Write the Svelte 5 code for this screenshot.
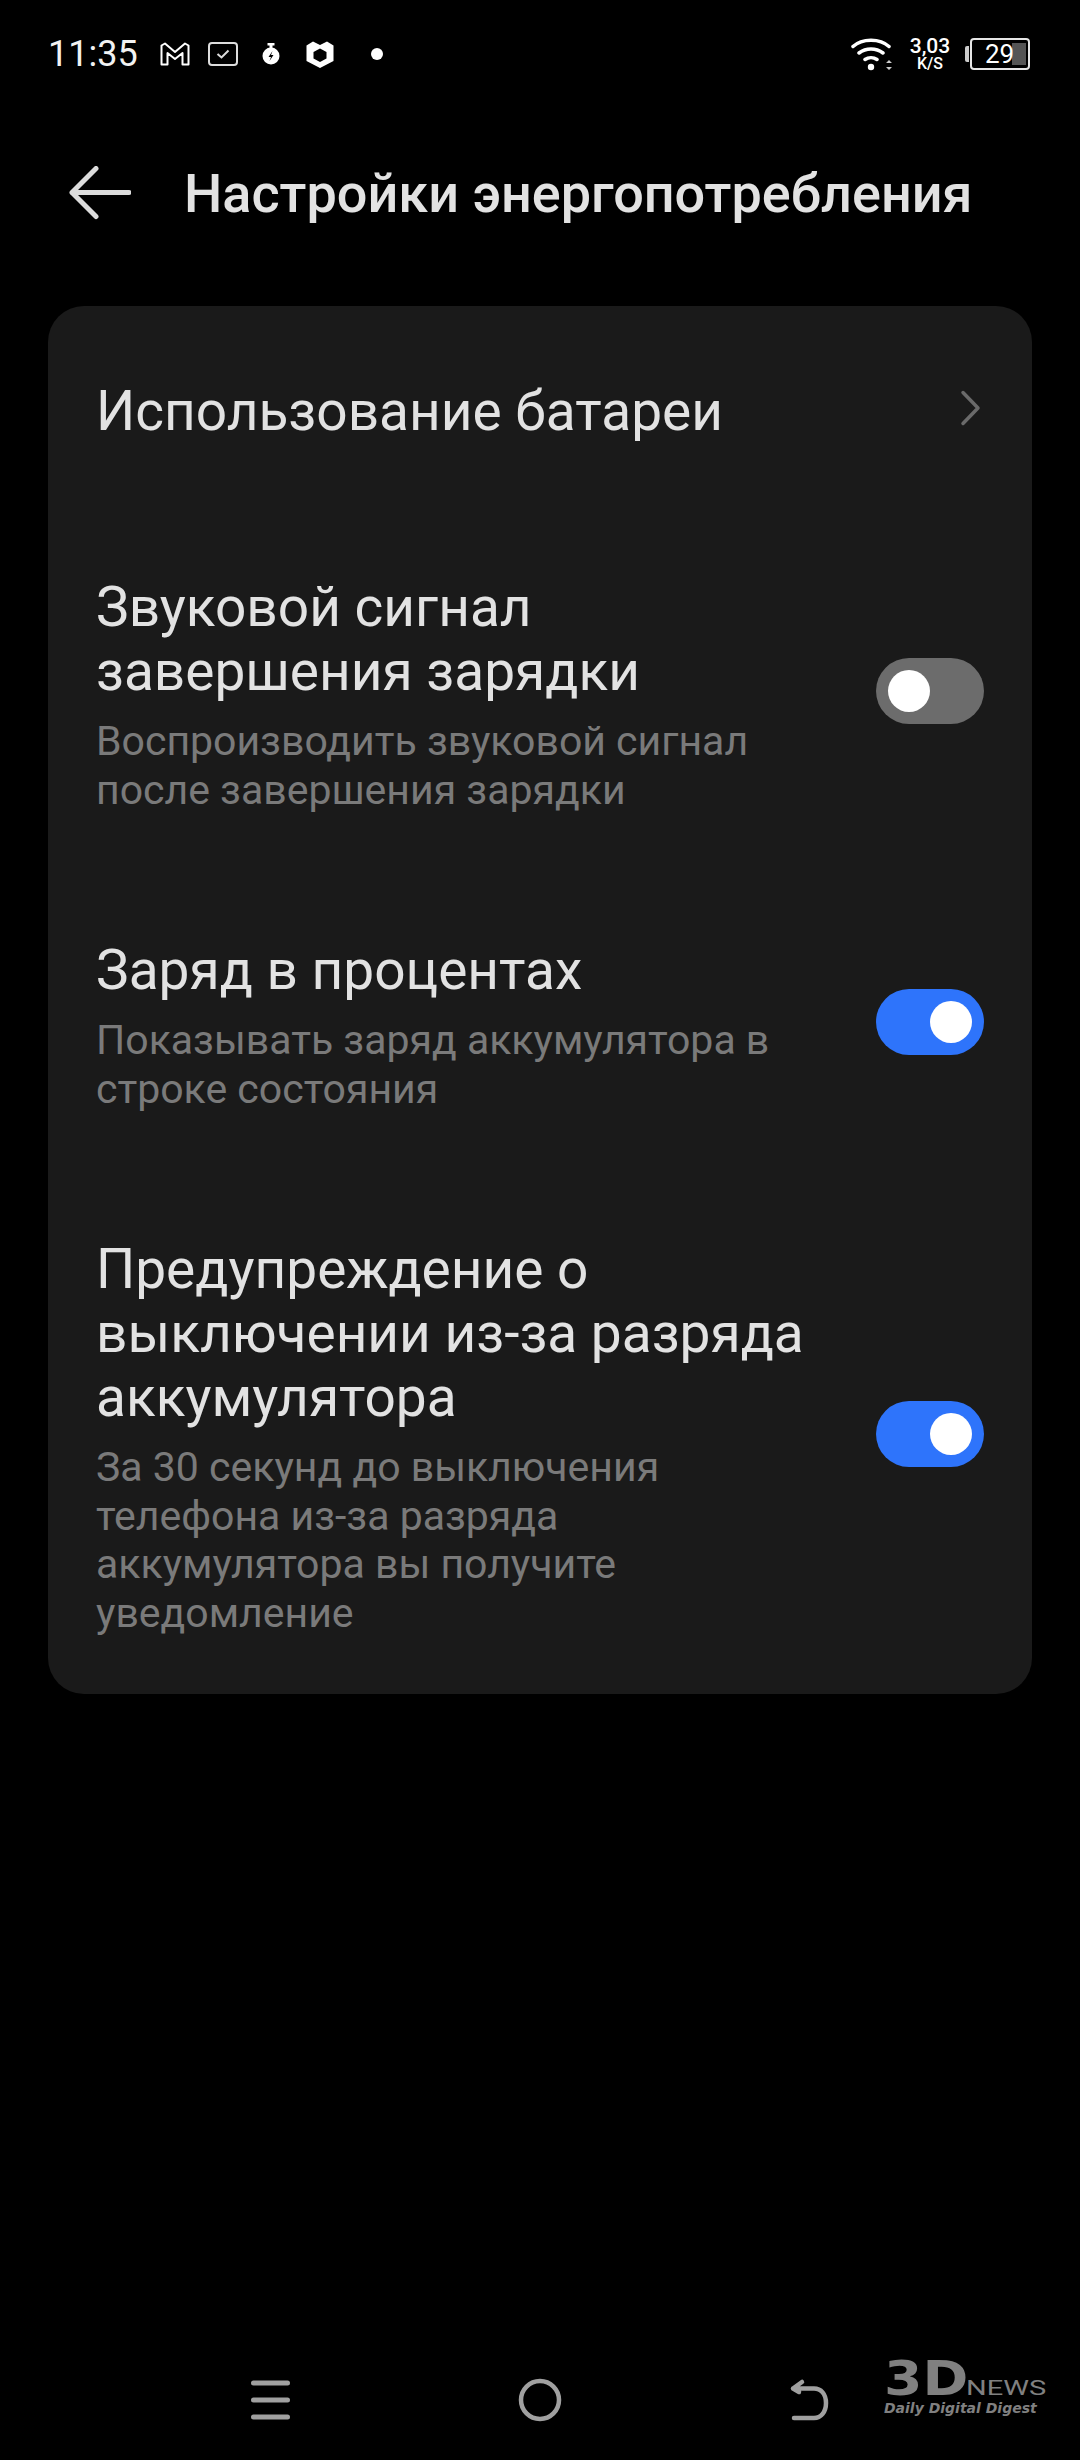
<script lang="ts">
  const rows = [
    { title: ["Звуковой сигнал", "завершения зарядки"], sub: ["Воспроизводить звуковой сигнал", "после завершения зарядки"], on: false },
    { title: ["Заряд в процентах"], sub: ["Показывать заряд аккумулятора в", "строке состояния"], on: true },
    {
      title: ["Предупреждение о", "выключении из-за разряда", "аккумулятора"],
      sub: ["За 30 секунд до выключения", "телефона из-за разряда", "аккумулятора вы получите", "уведомление"],
      on: true,
    },
  ];
</script>

<div class="screen">
  <header class="status">
    <div class="status-left">
      <span class="time">11:35</span>
      <svg class="ic-m" width="30" height="24" viewBox="0 0 30 24"><path d="M1.500 22.500V3.500L5 1.500l10 8.500 10-8.500 3.500 2v19h-6V11l-7.500 6-7.500-6v11.500z" fill="none" stroke="#fff" stroke-width="2" stroke-linejoin="round"/></svg>
      <svg class="ic-mail" width="30" height="24" viewBox="0 0 30 24"><rect x="1" y="1" width="28" height="22" rx="3" fill="none" stroke="#ddd" stroke-width="2"/><path d="M9.500 12l4 3.500 7-7" fill="none" stroke="#ddd" stroke-width="2"/></svg>
      <svg class="ic-timer" width="18" height="24" viewBox="0 0 18 24"><path d="M5.500 1h7v2.500h-2v3h-3v-3h-2z" fill="#fff"/><circle cx="9" cy="14" r="8.500" fill="#fff"/><path d="M10.500 9l-4 6h2.500l-1.500 4 4-6H9z" fill="#000"/></svg>
      <svg class="ic-shield" width="28" height="28" viewBox="0 0 28 28"><path d="M7 1.500L14 5l7-3.500 6.500 4v15.500L14 28 .5 21V5.500z" fill="#fff"/><path d="M14 8.500l6.500 3.500v6.500L14 22l-6.500-3.500V12z" fill="#000"/></svg>
      <span class="dot"></span>
    </div>
    <div class="status-right">
      <svg class="ic-wifi" width="44" height="34" viewBox="0 0 44 34"><path d="M2 9.500C11 1 29 1 38 9.500M8 16c7-5.500 17-5.500 24 0M14 22.500c3.500-2.500 8.500-2.500 12 0" fill="none" stroke="#fff" stroke-width="3.500" stroke-linecap="round"/><circle cx="20" cy="30" r="3.200" fill="#fff"/><path d="M38 23l3 3h-6zM38 33l3-3h-6z" fill="#ccc"/></svg>
      <div class="speed"><span>3,03</span><span class="unit">K/S</span></div>
      <div class="battery">
        <span class="nub"></span>
        <div class="cell"><span class="level"></span><span class="pct">29</span></div>
      </div>
    </div>
  </header>

  <div class="toolbar">
    <svg width="62" height="54" viewBox="0 0 62 54"><path d="M27 2.500L3 26.500l24 24M3 26.500h57" fill="none" stroke="#dcdcdc" stroke-width="5" stroke-linecap="round" stroke-linejoin="round"/></svg>
    <h1>Настройки энергопотребления</h1>
  </div>

  <section class="card">
    <div class="row link">
      <span class="title">Использование батареи</span>
      <svg class="chevron" width="22" height="36" viewBox="0 0 22 36"><path d="M3 2.500L18 18 3 33.500" fill="none" stroke="#6a6a6a" stroke-width="3.500" stroke-linecap="round" stroke-linejoin="round"/></svg>
    </div>
    {#each rows as row}
      <div class="row">
        <div class="text">
          <div class="title">{#each row.title as line}<div>{line}</div>{/each}</div>
          <div class="sub">{#each row.sub as line}<div>{line}</div>{/each}</div>
        </div>
        <span class="switch" class:on={row.on}><span class="knob"></span></span>
      </div>
    {/each}
  </section>

  <nav class="navbar">
    <svg class="nav-menu" width="40" height="40" viewBox="0 0 40 40"><path d="M2.500 3h34M2.500 20h34M2.500 37h34" stroke="#a0a0a0" stroke-width="5" stroke-linecap="round"/></svg>
    <svg class="nav-home" width="44" height="44" viewBox="0 0 44 44"><circle cx="22" cy="22" r="19" fill="none" stroke="#a0a0a0" stroke-width="4.500"/></svg>
    <svg class="nav-back" width="40" height="44" viewBox="0 0 40 44"><path d="M13 4L4 10.500l6 3.500M4 10.500h21c7 0 12 5.500 12 14.500s-5 15-12 15H5" fill="none" stroke="#a0a0a0" stroke-width="4.500" stroke-linecap="round" stroke-linejoin="round"/></svg>
    <div class="logo">
      <div class="logo-top"><span class="three">3D</span><span class="news">NEWS</span></div>
      <div class="digest">Daily Digital Digest</div>
    </div>
  </nav>
</div>

<style>
  :global(body) {
    margin: 0;
    background: #000;
  }

  .screen {
    display: flex;
    flex-direction: column;
    width: 1080px;
    height: 2460px;
    background: #000;
    font-family: Roboto, "Noto Sans", sans-serif;
  }

  .status {
    display: flex;
    justify-content: space-between;
    align-items: center;
    box-sizing: border-box;
    height: 108px;
    padding: 0 50px 0 48px;
  }

  .status-left,
  .status-right {
    display: flex;
    align-items: center;
  }

  .time {
    font-size: 36px;
    color: #f2f2f2;
    margin-right: 22px;
  }

  .ic-m { margin-right: 18px; }
  .ic-mail { margin-right: 24px; }
  .ic-timer { margin-right: 26px; }
  .ic-shield { margin-right: 37px; }

  .dot {
    width: 12px;
    height: 12px;
    border-radius: 50%;
    background: #fff;
  }

  .speed {
    display: flex;
    flex-direction: column;
    align-items: center;
    width: 50px;
    margin: 0 10px 0 10px;
    color: #fff;
    font-size: 21px;
    font-weight: 500;
    line-height: 20px;
  }

  .unit { font-size: 16px; line-height: 16px; }

  .battery {
    display: flex;
    align-items: center;
  }

  .nub {
    width: 4px;
    height: 16px;
    background: #ccc;
    margin-right: 1px;
    border-radius: 2px 0 0 2px;
  }

  .cell {
    position: relative;
    box-sizing: border-box;
    width: 60px;
    height: 32px;
    border: 2px solid #e6e6e6;
    border-radius: 4px;
  }

  .level {
    position: absolute;
    top: 3px;
    right: 2px;
    bottom: 3px;
    width: 14px;
    background: #555;
  }

  .pct {
    position: absolute;
    top: 0;
    left: 13px;
    color: #fff;
    font-size: 26px;
    line-height: 28px;
  }

  .toolbar {
    display: flex;
    flex: none;
    align-items: center;
    box-sizing: border-box;
    height: 198px;
    padding: 0 0 28px 69px;
  }

  h1 {
    margin: 0 0 0 53px;
    color: #e2e2e2;
    font-size: 54px;
    font-weight: 500;
    white-space: nowrap;
  }

  .card {
    display: flex;
    flex-direction: column;
    gap: 124px;
    box-sizing: border-box;
    margin: 0 48px;
    padding: 73px 48px 57px;
    background: #1a1a1a;
    border-radius: 36px;
  }

  .row {
    display: flex;
    align-items: center;
    justify-content: space-between;
  }

  .row.link {
    margin-bottom: 8px;
  }

  .chevron {
    margin: 0 2px 6px 0;
  }

  .title {
    color: #e2e2e2;
    font-size: 55px;
    line-height: 64px;
  }

  .sub {
    margin-top: 14px;
    color: #7a7a7a;
    font-size: 41px;
    line-height: 48.500px;
  }

  .switch {
    display: flex;
    flex: none;
    align-items: center;
    box-sizing: border-box;
    width: 108px;
    height: 66px;
    margin-bottom: 7px;
    padding: 0 12px;
    background: #6c6c6c;
    border-radius: 33px;
  }

  .switch.on {
    justify-content: flex-end;
    background: #2e74fb;
  }

  .knob {
    width: 42px;
    height: 42px;
    background: #fff;
    border-radius: 50%;
  }

  .navbar {
    position: relative;
    display: flex;
    align-items: center;
    box-sizing: border-box;
    height: 120px;
    margin-top: auto;
    padding-left: 251px;
  }

  .nav-home { margin-left: 227px; }
  .nav-back { margin-left: 227px; }

  .logo {
    position: absolute;
    left: 884px;
    top: 18px;
    width: 164px;
    color: #808080;
  }

  .logo-top {
    display: flex;
    align-items: flex-end;
    height: 40px;
  }

  .three {
    display: inline-block;
    width: 82px;
    font-family: "DejaVu Sans", sans-serif;
    font-size: 48px;
    font-weight: 700;
    line-height: 40px;
    transform: scaleX(1.15);
    transform-origin: left;
  }

  .news {
    display: inline-block;
    font-size: 20px;
    line-height: 20px;
    transform: scaleX(1.45);
    transform-origin: left;
  }

  .digest {
    margin-top: 2px;
    font-family: "DejaVu Sans", sans-serif;
    font-size: 14px;
    font-style: italic;
    font-weight: 700;
    line-height: 16px;
    white-space: nowrap;
  }
</style>
